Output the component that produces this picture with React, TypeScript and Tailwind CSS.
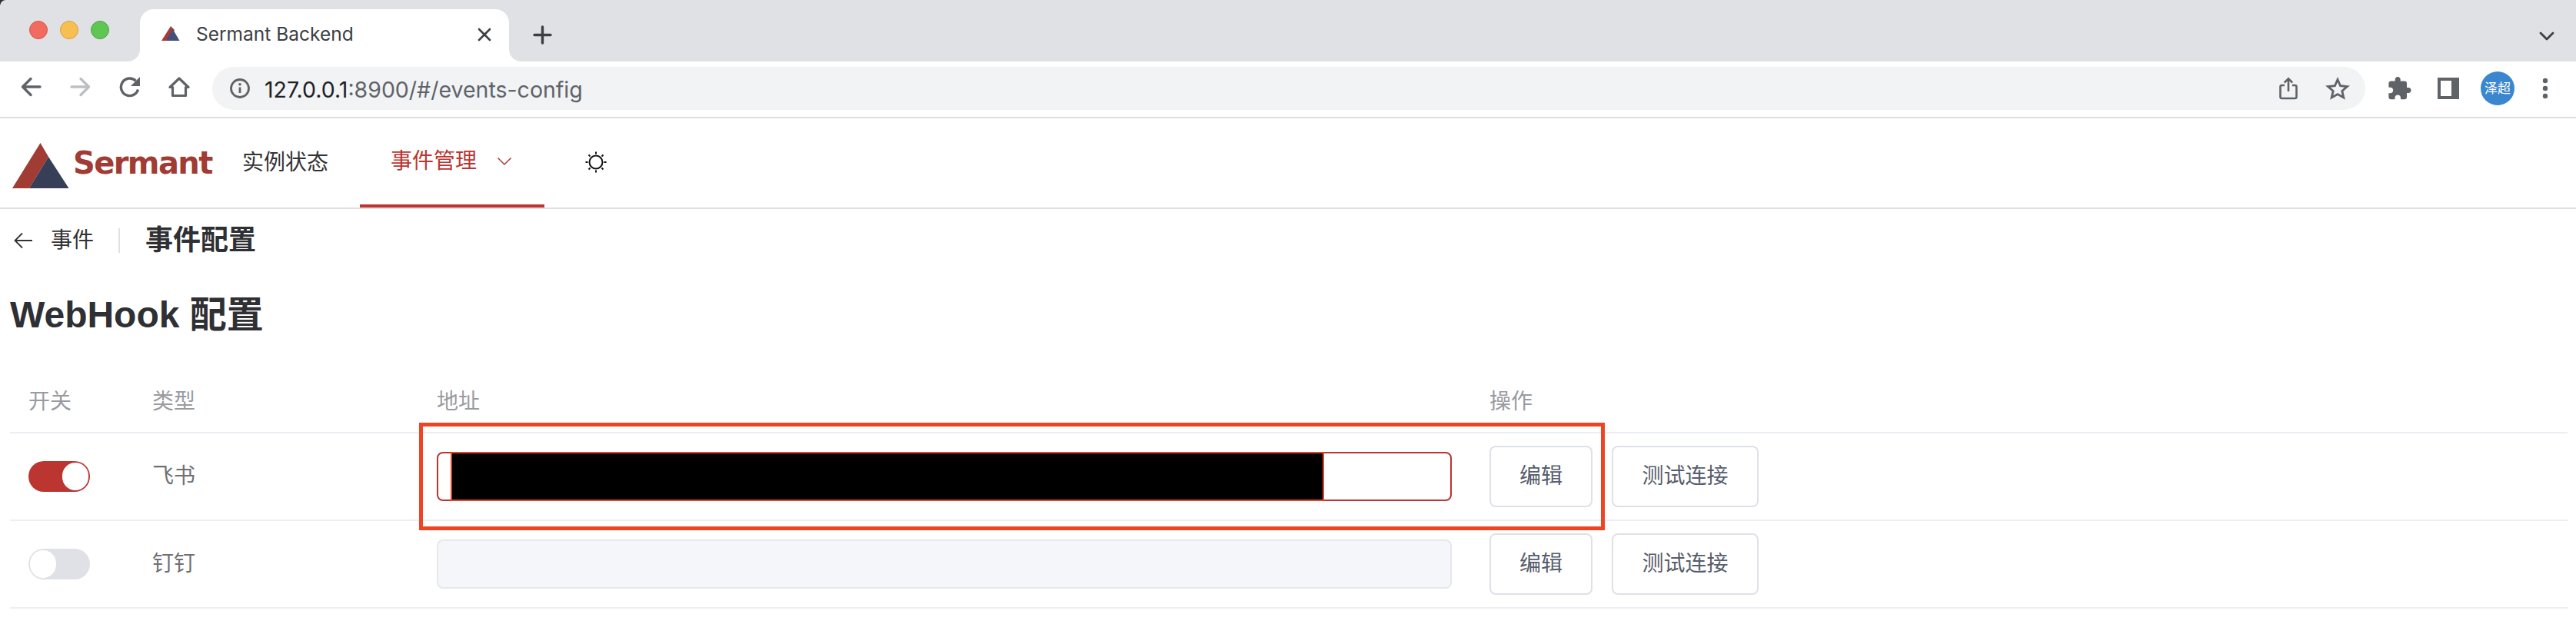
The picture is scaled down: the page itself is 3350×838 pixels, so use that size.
import React from "react";

const Gray = "#5f6368";

function Toggle({ on }: { on: boolean }) {
  return (
    <div className={on ? "w-[80px] h-[40px] rounded-[20px] bg-[#bb3531] flex items-center justify-end pr-[2px]" : "w-[80px] h-[40px] rounded-[20px] bg-[#dfe1e6] flex items-center justify-start pl-[2px]"}>
      <div className="w-[34px] h-[36px] rounded-full bg-white" />
    </div>
  );
}

function Btn({ w, label }: { w: string; label: string }) {
  return (
    <button className={`${w} h-[80px] rounded-[8px] border-2 border-[#dfe1e6] bg-white text-[28px] text-[#575d6c] flex items-center justify-center`}>
      {label}
    </button>
  );
}

function Row({ on, name, filled }: { on: boolean; name: string; filled: boolean }) {
  return (
    <div className="h-[114px] pl-[24px] grid grid-cols-[161px_370px_1369px_1fr] items-center border-b-2 border-[#ebeef3]">
      <Toggle on={on} />
      <div className="text-[28px] text-[#6f7075]">{name}</div>
      <div
        className={
          filled
            ? "relative w-[1320px] h-[64px] rounded-[8px] border-2 border-[#bb3531] bg-white"
            : "relative w-[1320px] h-[64px] rounded-[8px] border-2 border-[#e6e8ee] bg-[#f5f6fa]"
        }
      >
        {filled && <div className="absolute left-[16px] -top-[2px] w-[1136px] h-[64px] bg-black border-2 border-[#e5432b]" />}
      </div>
      <div className="flex gap-[25px]">
        <Btn w="w-[134px]" label="编辑" />
        <Btn w="w-[191px]" label="测试连接" />
      </div>
    </div>
  );
}

export default function App() {
  return (
    <div className="relative w-[3350px] h-[838px] overflow-hidden bg-white font-['Liberation_Sans','Noto_Sans_CJK_SC',sans-serif]">
      {/* window corner */}
      <svg className="absolute left-0 top-0" width="8" height="8" viewBox="0 0 8 8">
        <path d="M0 0H7Q1 1 0 7Z" fill="#26323c" />
      </svg>

      {/* tab strip */}
      <div className="h-[80px] bg-[#dfe1e5] flex items-end">
        <div className="self-start mt-[27px] ml-[38px] flex gap-[16px]">
          <div className="w-[24px] h-[24px] rounded-full bg-[#f16b5f] border border-[#d9534a]" />
          <div className="w-[24px] h-[24px] rounded-full bg-[#f6bf50] border border-[#d9a03e]" />
          <div className="w-[24px] h-[24px] rounded-full bg-[#5fc553] border border-[#4aa63f]" />
        </div>
        <div className="relative ml-[40px] w-[480px] h-[68px] bg-white rounded-t-[18px] flex items-center pb-[3px]">
          <div className="absolute -left-[16px] bottom-0 w-[16px] h-[16px] bg-white">
            <div className="w-full h-full bg-[#dfe1e5] rounded-br-[16px]" />
          </div>
          <div className="absolute -right-[16px] bottom-0 w-[16px] h-[16px] bg-white">
            <div className="w-full h-full bg-[#dfe1e5] rounded-bl-[16px]" />
          </div>
          <svg className="ml-[28px] -mt-[2px]" width="24" height="20" viewBox="0 0 24 20">
            <path d="M12 0L0 19H7L17 5Z" fill="#a63c37" />
            <path d="M14.5 3.5L23.5 19H6Z" fill="#45507a" />
          </svg>
          <span className="ml-[21px] text-[24.5px] text-[#3c4043] font-['Inter','Liberation_Sans',sans-serif] whitespace-nowrap">Sermant Backend</span>
          <svg className="ml-auto mr-[23px]" width="18" height="18" viewBox="0 0 18 18">
            <path d="M2 2L16 16M16 2L2 16" stroke="#3c4043" strokeWidth="2.6" strokeLinecap="round" />
          </svg>
        </div>
        <svg className="self-start mt-[33px] ml-[31px]" width="25" height="25" viewBox="0 0 25 25">
          <path d="M12.5 2V23M2 12.5H23" stroke="#3c4043" strokeWidth="3.4" strokeLinecap="round" />
        </svg>
        <svg className="self-start mt-[41px] ml-auto mr-[28px]" width="20" height="12" viewBox="0 0 20 12">
          <path d="M2 2L10 10L18 2" fill="none" stroke="#3c4043" strokeWidth="2.8" strokeLinecap="round" strokeLinejoin="round" />
        </svg>
      </div>

      {/* toolbar */}
      <div className="h-[74px] border-b-2 border-[#dfdfe1] flex items-center pb-[2px] pr-[24px]">
        <div className="mb-[4px] flex items-center">
          <svg className="ml-[27px]" width="27" height="26" viewBox="0 0 27 26">
            <path d="M25 13H3M13 2.5L2.5 13L13 23.5" fill="none" stroke={Gray} strokeWidth="3.4" strokeLinecap="round" strokeLinejoin="round" />
          </svg>
          <svg className="ml-[37px]" width="27" height="26" viewBox="0 0 27 26">
            <path d="M2 13H24M14 2.5L24.5 13L14 23.5" fill="none" stroke="#bdc0c3" strokeWidth="3.4" strokeLinecap="round" strokeLinejoin="round" />
          </svg>
          <svg className="ml-[37px]" width="28" height="28" viewBox="0 0 28 28">
            <path d="M24.5 17.5A11.3 11.3 0 1 1 21.6 6.2" fill="none" stroke={Gray} strokeWidth="3.4" />
            <path d="M27 1V13H15Z" fill={Gray} />
          </svg>
          <svg className="ml-[36px]" width="28" height="28" viewBox="0 0 28 28">
            <path d="M14 3L26 14.5H22.5V25.5H5.5V14.5H2Z" fill="none" stroke={Gray} strokeWidth="3.2" strokeLinejoin="round" />
          </svg>
        </div>
        <div className="ml-[29px] w-[2800px] h-[56px] rounded-[28px] bg-[#f1f3f4] flex items-center">
          <svg className="ml-[22px]" width="28" height="28" viewBox="0 0 28 28">
            <circle cx="14" cy="14" r="11.5" fill="none" stroke={Gray} strokeWidth="2.8" />
            <path d="M14 12.5V20" stroke={Gray} strokeWidth="2.8" />
            <circle cx="14" cy="8.8" r="1.8" fill={Gray} />
          </svg>
          <span className="ml-[18px] mt-[5px] text-[28.5px] text-[#5f6368] font-['Inter','Liberation_Sans',sans-serif] whitespace-nowrap">
            <span className="text-[#202124]">127.0.0.1</span>:8900/#/events-config
          </span>
          <svg className="ml-auto" width="24" height="30" viewBox="0 0 24 30">
            <path d="M7 11H3.5A2 2 0 0 0 1.5 13V26A2 2 0 0 0 3.5 28H20.5A2 2 0 0 0 22.5 26V13A2 2 0 0 0 20.5 11H17" fill="none" stroke={Gray} strokeWidth="2.6" />
            <path d="M12 19V2.5M6.8 7.5L12 2.3L17.2 7.5" fill="none" stroke={Gray} strokeWidth="2.6" />
          </svg>
          <svg className="ml-[36px] mr-[20px]" width="32" height="30" viewBox="0 0 32 30">
            <path d="M16 3.5L19.6 11.7L28.5 12.5L21.8 18.4L23.8 27L16 22.5L8.2 27L10.2 18.4L3.5 12.5L12.4 11.7Z" fill="none" stroke={Gray} strokeWidth="2.8" strokeLinejoin="miter" />
          </svg>
        </div>
        <svg className="ml-[29px]" width="32" height="32" viewBox="1 0.5 23 22.5">
          <path fill={Gray} d="M20.5 11H19V7c0-1.1-.9-2-2-2h-4V3.5C13 2.12 11.88 1 10.5 1S8 2.12 8 3.5V5H4c-1.1 0-1.99.9-1.99 2v3.8H3.5c1.49 0 2.7 1.21 2.7 2.7s-1.21 2.7-2.7 2.7H2V20c0 1.1.9 2 2 2h3.8v-1.5c0-1.49 1.21-2.7 2.7-2.7 1.49 0 2.7 1.21 2.7 2.7V22H17c1.1 0 2-.9 2-2v-4h1.5c1.38 0 2.5-1.12 2.5-2.5S21.88 11 20.5 11z" />
        </svg>
        <svg className="ml-[33px]" width="28" height="28" viewBox="0 0 28 28">
          <path fill={Gray} fillRule="evenodd" d="M0 0H28V28H0ZM4 4V24H18V4Z" />
        </svg>
        <div className="ml-[28px] w-[44px] h-[44px] rounded-full bg-[#3a87d0] flex items-center justify-center text-[17px] leading-none text-white whitespace-nowrap">泽超</div>
        <svg className="ml-[36px]" width="8" height="28" viewBox="0 0 8 28">
          <circle cx="4" cy="4" r="3.2" fill={Gray} />
          <circle cx="4" cy="14" r="3.2" fill={Gray} />
          <circle cx="4" cy="24" r="3.2" fill={Gray} />
        </svg>
      </div>

      {/* nav */}
      <div className="h-[118px] border-b-2 border-[#dfdfe1] flex items-stretch">
        <div className="flex items-center pl-[16px]">
          <svg className="mt-[6px]" width="74" height="59" viewBox="0 0 74 59">
            <path d="M36.5 0L0 59H22L47 18Z" fill="#a03c34" />
            <path d="M47 18L73.5 59H22Z" fill="#363f57" />
          </svg>
          <span className="ml-[5px] text-[40px] leading-none font-bold text-[#a03c34] tracking-[-1.6px] font-['DejaVu_Sans',sans-serif] -mt-[1px] w-[182px]">Sermant</span>
        </div>
        <div className="ml-[38px] flex items-center text-[28px] text-[#333]">实例状态</div>
        <div className="ml-[41px] w-[240px] border-b-4 border-[#bb3531] flex items-center pl-[40px] text-[28px] text-[#bb3531]">
          事件管理
          <svg className="ml-[26px]" width="20" height="12" viewBox="0 0 20 12">
            <path d="M1.5 1.5L10 10L18.5 1.5" fill="none" stroke="#bb3531" strokeWidth="1.5" />
          </svg>
        </div>
        <div className="ml-[52px] flex items-center -mt-[2px]">
          <svg width="30" height="30" viewBox="0 0 30 30">
            <circle cx="15" cy="15" r="8.5" fill="none" stroke="#111" strokeWidth="2" />
            <path d="M15 1.5V4.5M15 25.5V28.5M1.5 15H4.5M25.5 15H28.5M5.5 5.5L7.5 7.5M22.5 22.5L24.5 24.5M24.5 5.5L22.5 7.5M7.5 22.5L5.5 24.5" stroke="#111" strokeWidth="2" />
          </svg>
        </div>
      </div>

      {/* breadcrumb */}
      <div className="h-[82px] flex items-center pl-[18px]">
        <svg width="24" height="22" viewBox="0 0 24 22">
          <path d="M24 11H2M11 1.5L1.5 11L11 20.5" fill="none" stroke="#333" strokeWidth="1.8" />
        </svg>
        <span className="ml-[24px] text-[28px] text-[#333]">事件</span>
        <div className="ml-[32px] w-[2px] h-[32px] bg-[#dfe1e6]" />
        <span className="ml-[33px] text-[36px] font-bold text-[#2f3033]">事件配置</span>
      </div>

      {/* title */}
      <h1 className="mt-[24px] pl-[13px] h-[64px] leading-[64px] text-[48px] font-bold text-[#2f3033] whitespace-nowrap">WebHook 配置</h1>

      {/* table */}
      <div className="mt-[38px] ml-[13px] w-[3326px]">
        <div className="h-[84px] pl-[24px] pt-[4px] grid grid-cols-[161px_370px_1369px_1fr] items-center border-b-2 border-[#ebeef3] text-[28px] text-[#9a9ba0]">
          <div>开关</div>
          <div>类型</div>
          <div>地址</div>
          <div>操作</div>
        </div>
        <Row on name="飞书" filled />
        <Row on={false} name="钉钉" filled={false} />
      </div>

      {/* annotation */}
      <div className="absolute left-[545px] top-[550px] w-[1542px] h-[140px] border-[5px] border-[#ef4423]" />
    </div>
  );
}
